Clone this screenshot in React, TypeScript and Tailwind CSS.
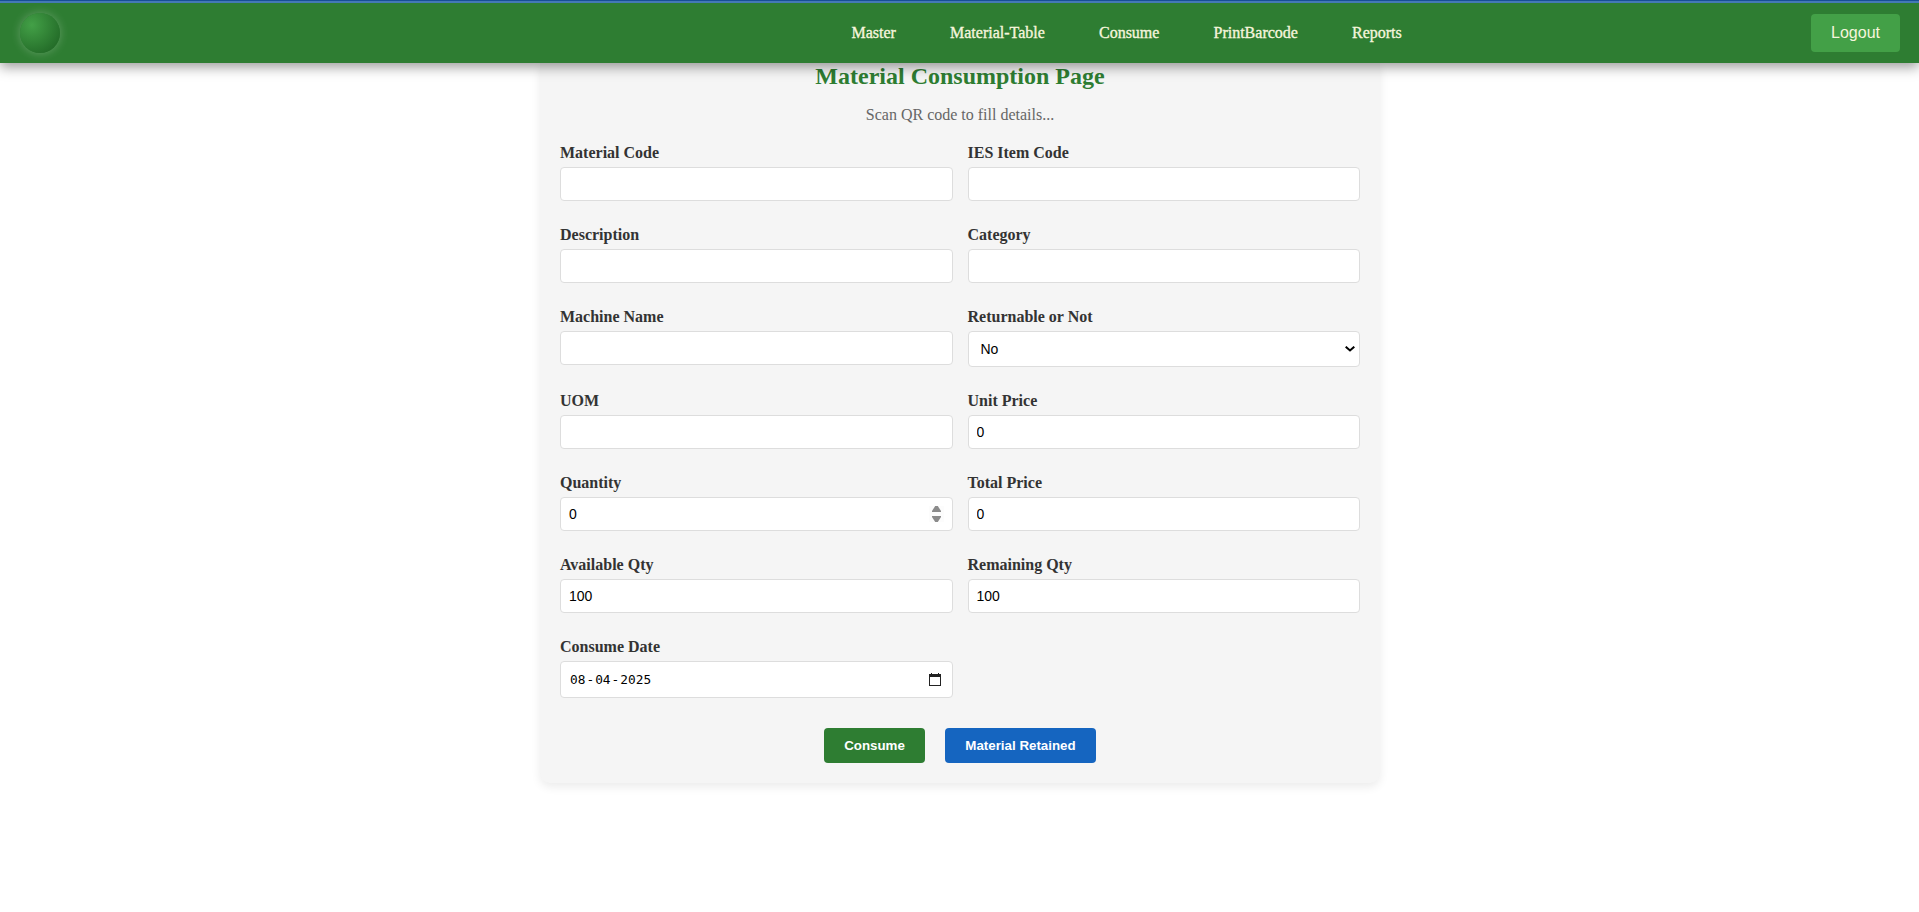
import React from "react";

const NAV_LINKS = ["Master", "Material-Table", "Consume", "PrintBarcode", "Reports"];

const CONTROL =
  "flex items-center rounded-[4px] border border-[#dddddd] bg-white font-['Liberation_Sans',Arial,sans-serif] text-[14px] leading-[16px] text-black";

function Field({ label, children }: { label: string; children: React.ReactNode }) {
  return (
    <div className="flex flex-col">
      <label className="mb-[5px] text-[16px] font-bold leading-[18px] text-[#333333]">{label}</label>
      {children}
    </div>
  );
}

function TextBox({ value = "" }: { value?: string }) {
  return <input readOnly value={value} className={`${CONTROL} h-[34px] w-full px-2 outline-none`} />;
}

function QuantityBox() {
  return (
    <div className={`${CONTROL} h-[34px] justify-between pl-2 pr-[8px]`}>
      <span>0</span>
      <svg width="15" height="16" viewBox="0 0 15 16" className="bg-[#fcfcfc]" fill="#8b8b8b">
        <path d="M3 6V5L6.2 0h2.6L12 5v1z" />
        <path d="M3 10v1L6.2 16h2.6L12 11v-1z" />
      </svg>
    </div>
  );
}

function SelectBox() {
  return (
    <div className={`${CONTROL} h-[36px] justify-between pl-3 pr-[4px]`}>
      <span>No</span>
      <svg width="10" height="6" viewBox="0 0 10 6" fill="none" stroke="#000" strokeWidth="2">
        <path d="M0.7 0.7L5 4.4L9.3 0.7" />
      </svg>
    </div>
  );
}

function DateBox() {
  return (
    <div className={`${CONTROL} h-[37px] justify-between pl-[9px] pr-[11px]`}>
      <span className="flex gap-[1px] font-['DejaVu_Sans_Mono',monospace] text-[12.8px]">
        <span>08</span>
        <span>-</span>
        <span>04</span>
        <span>-</span>
        <span>2025</span>
      </span>
      <svg width="12" height="13" viewBox="0 0 12 13" fill="#222">
        <path fillRule="evenodd" d="M2 0h1v1h6V0h1v1h2v12H0V1h2zM1 4v8h10V4z" />
      </svg>
    </div>
  );
}

export default function App() {
  return (
    <div className="flex h-[912px] flex-col overflow-hidden bg-white font-['Liberation_Serif','Times_New_Roman',serif]">
      <header className="relative z-10 h-[63px] shrink-0 bg-[#2e7d32] shadow-[0_4px_12px_rgba(0,0,0,0.4)]">
        <div className="h-px bg-[#174f94]" />
        <div className="h-[2px] bg-[#4479b5]" />
        <div className="flex h-[60px] items-center pl-5 pr-[19px]">
          <div className="size-10 rounded-full bg-[radial-gradient(circle_at_30%_30%,#43a047,#1b5e20)] shadow-[0_0_10px_rgba(255,255,255,0.25)]" />
          <nav className="ml-[791.5px] flex gap-[54.1px] text-[16px] leading-[18px] font-medium text-[#f5f5dc] [-webkit-text-stroke:0.35px_#f5f5dc]">
            {NAV_LINKS.map((link) => (
              <a key={link}>{link}</a>
            ))}
          </nav>
          <button className="ml-auto h-[38px] w-[89px] rounded-[4px] bg-[#43a047] font-['Liberation_Sans',Arial,sans-serif] text-[16px] text-[#f5f5dc]">
            Logout
          </button>
        </div>
      </header>

      <main className="ml-[540px] h-[720px] w-[840px] rounded-b-[10px] bg-[#f5f5f5] px-5 shadow-[0_4px_10px_rgba(0,0,0,0.08)]">
        <h1 className="text-center text-[24px] font-bold leading-[27px] text-[#2e7d32]">Material Consumption Page</h1>
        <p className="mt-[16px] text-center text-[16px] leading-[18px] text-[#666666]">Scan QR code to fill details...</p>
        <div className="mt-5 grid grid-cols-2 items-start gap-x-[15px] gap-y-[25px]">
          <Field label="Material Code"><TextBox /></Field>
          <Field label="IES Item Code"><TextBox /></Field>
          <Field label="Description"><TextBox /></Field>
          <Field label="Category"><TextBox /></Field>
          <Field label="Machine Name"><TextBox /></Field>
          <Field label="Returnable or Not"><SelectBox /></Field>
          <Field label="UOM"><TextBox /></Field>
          <Field label="Unit Price"><TextBox value="0" /></Field>
          <Field label="Quantity"><QuantityBox /></Field>
          <Field label="Total Price"><TextBox value="0" /></Field>
          <Field label="Available Qty"><TextBox value="100" /></Field>
          <Field label="Remaining Qty"><TextBox value="100" /></Field>
          <Field label="Consume Date"><DateBox /></Field>
        </div>
        <div className="mt-[30px] flex justify-center gap-5 font-['Liberation_Sans',Arial,sans-serif] text-[13.333px] font-bold text-white">
          <button className="h-[35px] w-[101px] rounded-[4px] bg-[#2e7d32]">Consume</button>
          <button className="h-[35px] w-[151px] rounded-[4px] bg-[#1565c0]">Material Retained</button>
        </div>
      </main>
    </div>
  );
}
